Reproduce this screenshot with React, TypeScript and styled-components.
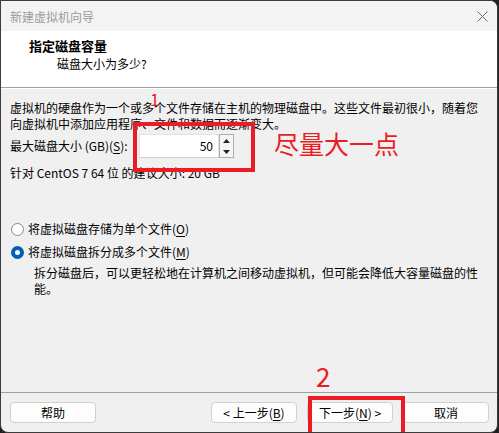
import styled, { createGlobalStyle } from "styled-components";

const GlobalStyle = createGlobalStyle`
  html, body {
    margin: 0;
    padding: 0;
    background: #1f1f1f;
  }
  body {
    font-family: "Noto Sans CJK SC", "Noto Sans", sans-serif;
    font-size: 12px;
    color: #000;
  }
`;

const RED = "#ec1c24";

const Window = styled.div`
  position: relative;
  box-sizing: border-box;
  width: 498px;
  height: 433px;
  border: 1px solid #3c3c3c;
  border-radius: 0 8px 8px 8px;
  background: #f0f0f0;
  display: flex;
  flex-direction: column;
  overflow: hidden;
`;

const TitleBar = styled.div`
  height: 30px;
  background: #f3f3f3;
  display: flex;
  align-items: center;
  justify-content: space-between;
  padding: 0 9px 0 9px;
  color: #9c9c9c;
  font-size: 12px;
`;

const CloseIcon = styled.svg`
  width: 11px;
  height: 11px;
`;

const Header = styled.div`
  box-sizing: border-box;
  height: 57px;
  background: #fff;
  border-bottom: 1px solid #a0a0a0;
  box-shadow: 0 1px 0 #fff;
  display: flex;
  flex-direction: column;
  padding-left: 28px;
  padding-top: 6px;
`;

const HeaderTitle = styled.div`
  font-weight: 700;
  font-size: 13px;
  line-height: 18px;
`;

const HeaderSub = styled.div`
  padding-left: 28px;
  line-height: 18px;
`;

const Body = styled.div`
  flex: 1;
  display: flex;
  flex-direction: column;
  padding: 12px 9px 0 9px;
  line-height: 16px;
`;

const Paragraph = styled.div`
  width: 472px;
`;

const SizeRow = styled.div`
  display: flex;
  align-items: center;
  margin-top: 2px;
  height: 24px;
`;

const SizeLabel = styled.span`
  width: 129px;
`;

const SpinInput = styled.div`
  box-sizing: border-box;
  width: 80px;
  height: 24px;
  background: #fff;
  border: 1px solid #e3e3e3;
  border-bottom-color: #d0d0d0;
  text-align: right;
  padding-right: 5px;
  line-height: 22px;
`;

const SpinButtons = styled.div`
  box-sizing: border-box;
  width: 15px;
  height: 24px;
  border: 1px solid #adadad;
  background: #f5f5f5;
  display: flex;
  flex-direction: column;
`;

const SpinHalf = styled.div`
  flex: 1;
  display: flex;
  align-items: center;
  justify-content: center;
`;

const Line = styled.div<{ $top?: number }>`
  margin-top: ${(p) => p.$top ?? 0}px;
`;

const RadioRow = styled.label<{ $top: number }>`
  display: flex;
  align-items: center;
  gap: 4px;
  margin-top: ${(p) => p.$top}px;
  height: 16px;
`;

const RadioCircle = styled.span<{ $checked?: boolean }>`
  box-sizing: border-box;
  width: 13px;
  height: 13px;
  border-radius: 50%;
  margin-left: 1px;
  background: #fff;
  border: ${(p) => (p.$checked ? "4px solid #005fb8" : "1px solid #888")};
`;

const Desc = styled.div`
  padding-left: 24px;
  margin-top: 5px;
  width: 448px;
`;

const U = styled.span`
  text-decoration: underline;
  text-underline-offset: 2px;
`;

const Footer = styled.div`
  height: 40px;
  box-sizing: border-box;
  border-top: 1px solid #a0a0a0;
  padding: 9px 8px 0 9px;
  display: flex;
  gap: 10px;
`;

const Button = styled.button<{ $pushRight?: boolean }>`
  box-sizing: border-box;
  width: 86px;
  height: 21px;
  border: 1px solid #d0d0d0;
  border-radius: 4px;
  background: #fdfdfd;
  font-family: inherit;
  font-size: 12px;
  color: #000;
  padding: 0;
  line-height: 19px;
  margin-left: ${(p) => (p.$pushRight ? "auto" : "0")};
`;

const Box = styled.div<{ $x: number; $y: number; $w: number; $h: number }>`
  position: absolute;
  left: ${(p) => p.$x}px;
  top: ${(p) => p.$y}px;
  width: ${(p) => p.$w}px;
  height: ${(p) => p.$h}px;
  box-sizing: border-box;
  border: 4px solid ${RED};
  pointer-events: none;
`;

const Note = styled.div<{ $x: number; $y: number; $size: number }>`
  position: absolute;
  left: ${(p) => p.$x}px;
  top: ${(p) => p.$y}px;
  color: ${RED};
  font-size: ${(p) => p.$size}px;
  line-height: 1;
  font-family: "Noto Sans CJK SC", "Noto Sans", sans-serif;
`;

export default function App() {
  return (
    <>
      <GlobalStyle />
      <Window>
        <TitleBar>
          <span>新建虚拟机向导</span>
          <CloseIcon viewBox="0 0 11 11">
            <path d="M0.5 0.5 L10.5 10.5 M10.5 0.5 L0.5 10.5" stroke="#6a6a6a" strokeWidth="1" />
          </CloseIcon>
        </TitleBar>
        <Header>
          <HeaderTitle>指定磁盘容量</HeaderTitle>
          <HeaderSub>磁盘大小为多少?</HeaderSub>
        </Header>
        <Body>
          <Paragraph>
            虚拟机的硬盘作为一个或多个文件存储在主机的物理磁盘中。这些文件最初很小，随着您向虚拟机中添加应用程序、文件和数据而逐渐变大。
          </Paragraph>
          <SizeRow>
            <SizeLabel>
              最大磁盘大小 (GB)(<U>S</U>):
            </SizeLabel>
            <SpinInput>50</SpinInput>
            <SpinButtons>
              <SpinHalf>
                <svg width="7" height="4" viewBox="0 0 7 4">
                  <path d="M3.5 0 L7 4 L0 4 Z" fill="#222" />
                </svg>
              </SpinHalf>
              <SpinHalf>
                <svg width="7" height="4" viewBox="0 0 7 4">
                  <path d="M0 0 L7 0 L3.5 4 Z" fill="#222" />
                </svg>
              </SpinHalf>
            </SpinButtons>
          </SizeRow>
          <Line $top={7}>针对 CentOS 7 64 位 的建议大小: 20 GB</Line>
          <RadioRow $top={40}>
            <RadioCircle />
            <span>
              将虚拟磁盘存储为单个文件(<U>O</U>)
            </span>
          </RadioRow>
          <RadioRow $top={7}>
            <RadioCircle $checked />
            <span>
              将虚拟磁盘拆分成多个文件(<U>M</U>)
            </span>
          </RadioRow>
          <Desc>
            拆分磁盘后，可以更轻松地在计算机之间移动虚拟机，但可能会降低大容量磁盘的性能。
          </Desc>
        </Body>
        <Footer>
          <Button>帮助</Button>
          <Button $pushRight>
            &lt; 上一步(<U>B</U>)
          </Button>
          <Button>
            下一步(<U>N</U>) &gt;
          </Button>
          <Button>取消</Button>
        </Footer>

        <Note $x={149} $y={89} $size={17}>1</Note>
        <Box $x={132} $y={121} $w={122} $h={50} />
        <Note $x={273} $y={130} $size={25}>尽量大一点</Note>
        <Note $x={315} $y={362} $size={26}>2</Note>
        <Box $x={307} $y={395} $w={97} $h={44} />
      </Window>
    </>
  );
}
